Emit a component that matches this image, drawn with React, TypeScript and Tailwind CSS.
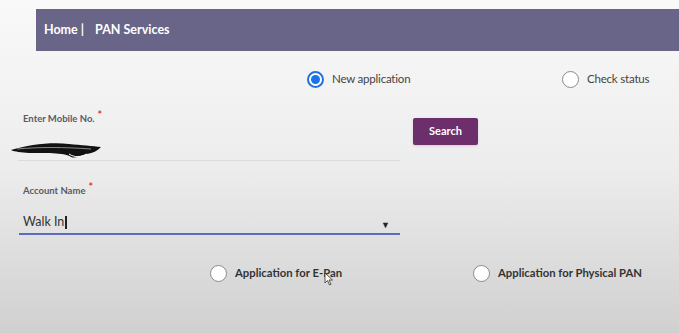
// radio circle, filled when selected
function Radio({ checked }: { checked?: boolean }) {
  return (
    <span
      className={
        checked
          ? "flex h-[17px] w-[17px] items-center justify-center rounded-full border-2 border-[#1a73e8] bg-white"
          : "flex h-[17px] w-[17px] items-center justify-center rounded-full border border-[#8a8a8a] bg-white"
      }
    >
      {checked && <span className="h-[9px] w-[9px] rounded-full bg-[#1a73e8]" />}
    </span>
  );
}

export default function App() {
  return (
    <div
      className="relative h-[333px] w-[679px] overflow-hidden bg-gradient-to-b from-[#f9f9f9] via-[#ededed] to-[#d0d0d0]"
      style={{ fontFamily: "Lato, 'Open Sans', sans-serif" }}
    >
      {/* header bar */}
      <div className="ml-[36px] mt-[9px] flex h-[42px] items-center bg-[#696589] pl-[8px] text-[12.5px] font-bold text-white">
        <span>Home |</span>
        <span className="ml-[11px]">PAN Services</span>
      </div>

      {/* application type */}
      <div className="mt-[19px] flex h-[18px] items-center text-[11.5px] tracking-[-0.2px] text-[#444]">
        <div className="ml-[307px] flex w-[255px] items-center gap-[8px]">
          <Radio checked />
          <span>New application</span>
        </div>
        <div className="flex items-center gap-[8px]">
          <Radio />
          <span>Check status</span>
        </div>
      </div>

      {/* mobile number */}
      <div className="mt-[21px] flex">
        <div className="ml-[18px] w-[382px]">
          <div className="flex pl-[5px] text-[9.5px] font-bold text-[#5a5a66]">
            <span className="mt-[3px]">Enter Mobile No.</span>
            <span className="ml-[3px] text-[11px] leading-none text-[#e53935]">*</span>
          </div>
          <div className="relative h-[35px] border-b border-[#dcdcdc]">
            <svg className="absolute -left-[9px] top-[14px]" width="94" height="22" viewBox="0 0 94 22">
              <path
                d="M2 10 C 20 5, 40 2, 60 4 C 72 5, 84 6, 92 7 C 88 11, 84 13, 78 14 C 72 15, 68 19, 62 17 C 58 13, 40 13, 20 13 C 12 12, 6 12, 2 10 Z"
                fill="#111"
              />
              <path d="M8 9 C 30 7, 55 7, 82 9" stroke="#888" strokeWidth="1" fill="none" />
              <path d="M60 14 C 66 18, 72 17, 78 14" stroke="#fff" strokeWidth="1" fill="none" />
            </svg>
          </div>
        </div>
        <button className="ml-[13px] mt-[9px] h-[27px] w-[65px] rounded-[2px] bg-[#6d2e6c] text-[11px] font-bold text-white shadow">
          Search
        </button>
      </div>

      {/* account name */}
      <div className="ml-[19px] mt-[20px] w-[381px]">
        <div className="flex pl-[4px] text-[9.5px] font-bold text-[#5a5a66]">
          <span className="mt-[3px]">Account Name</span>
          <span className="ml-[3px] text-[11px] leading-none text-[#e53935]">*</span>
        </div>
        <div className="mt-[13px] flex h-[23px] items-end justify-between border-b-2 border-[#5b6cc0] pb-[1px] pl-[4px] pr-[10px] text-[12.5px] text-[#333]">
          <span className="flex items-center">
            Walk In<span className="ml-[1px] h-[13px] w-[1.5px] bg-[#222]" />
          </span>
          <span className="text-[9px] text-[#222]">▼</span>
        </div>
      </div>

      {/* pan type */}
      <div className="mt-[30px] flex h-[18px] items-center text-[11.3px] font-bold text-[#333]">
        <div className="ml-[210px] flex w-[263px] items-center gap-[8px]">
          <Radio />
          <span>Application for E-Pan</span>
        </div>
        <div className="flex items-center gap-[8px]">
          <Radio />
          <span>Application for Physical PAN</span>
        </div>
      </div>

      {/* mouse pointer */}
      <svg className="absolute left-[324px] top-[272px]" width="10" height="14" viewBox="0 0 10 14">
        <path d="M1 1 L1 11 L3.5 8.5 L5.5 13 L7 12.3 L5 8 L8.5 8 Z" fill="#fff" stroke="#444" strokeWidth="0.9" />
      </svg>
    </div>
  );
}
